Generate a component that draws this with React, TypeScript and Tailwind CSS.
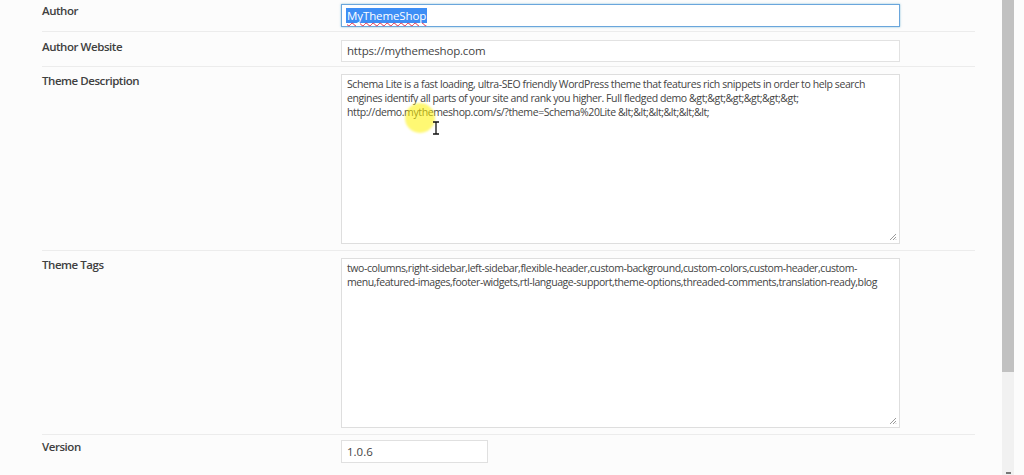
import React from "react";

const Grip = () => (
  <svg className="absolute right-[2px] bottom-[2px]" width="8" height="8" viewBox="0 0 8 8">
    <path d="M7 1 L1 7 M7 4 L4 7 M7 6.5 L6.5 7" stroke="#9a9a9a" strokeWidth="1" fill="none" />
  </svg>
);

const Row = ({
  label,
  className,
  children,
  last,
}: {
  label: string;
  className: string;
  children: React.ReactNode;
  last?: boolean;
}) => (
  <div className={`flex ${last ? "" : "border-b border-[#ececec]"} ${className}`}>
    <div className="w-[299px] shrink-0 text-[11.5px] leading-[14px] font-semibold tracking-[-0.45px] text-[#404040]">
      {label}
    </div>
    <div className="flex-1">{children}</div>
  </div>
);

const App = () => {
  const descLines = [
    "Schema Lite is a fast loading, ultra-SEO friendly WordPress theme that features rich snippets in order to help search",
    "engines identify all parts of your site and rank you higher. Full fledged demo &gt;&gt;&gt;&gt;&gt;&gt;",
    "http://demo.mythemeshop.com/s/?theme=Schema%20Lite &lt;&lt;&lt;&lt;&lt;&lt;",
  ];
  const tagLines = [
    "two-columns,right-sidebar,left-sidebar,flexible-header,custom-background,custom-colors,custom-header,custom-",
    "menu,featured-images,footer-widgets,rtl-language-support,theme-options,threaded-comments,translation-ready,blog",
  ];

  return (
    <div className="relative flex h-[475px] w-[1024px] overflow-hidden bg-[#fcfcfc] font-['Open_Sans',sans-serif] text-[#444]">
      <div className="w-[975px] shrink-0 pl-[42px]">
        {/* Author */}
        <Row label="Author" className="pt-[4px] pb-[4px]">
          <div className="flex h-[23px] w-[559px] items-center border border-[#6aa6dc] bg-white px-[4px] text-[11.5px] shadow-[0_0_2px_rgba(30,140,190,0.5)]">
            <span className="bg-[#3d8ef5] px-[1px] leading-[15px] tracking-[-0.1px] text-white underline decoration-wavy decoration-[#e0304a] decoration-1 underline-offset-2">
              MyThemeShop
            </span>
          </div>
        </Row>

        {/* Author Website */}
        <Row label="Author Website" className="pt-[8px] pb-[4px]">
          <div className="flex h-[22px] w-[559px] items-center border border-[#e2e2e2] bg-white px-[5px] text-[11.5px] tracking-[-0.2px]">
            https://mythemeshop.com
          </div>
        </Row>

        {/* Theme Description */}
        <Row label="Theme Description" className="pt-[7px] pb-[6px]">
          <div className="relative h-[170px] w-[559px] border border-[#dedede] bg-white px-[5px] pt-[2px] text-[10.5px] leading-[14px] tracking-[-0.4px]">
            {descLines.map((l) => (
              <div key={l} className="whitespace-nowrap">
                {l}
              </div>
            ))}
            <Grip />
          </div>
        </Row>

        {/* Theme Tags */}
        <Row label="Theme Tags" className="pt-[7px] pb-[6px]">
          <div className="relative h-[170px] w-[559px] border border-[#dedede] bg-white px-[5px] pt-[2px] text-[10.5px] leading-[14px] tracking-[-0.42px]">
            {tagLines.map((l) => (
              <div key={l} className="whitespace-nowrap">
                {l}
              </div>
            ))}
            <Grip />
          </div>
        </Row>

        {/* Version */}
        <Row label="Version" className="pt-[5px]" last>
          <div className="flex h-[23px] w-[147px] items-center border border-[#e0e0e0] bg-white px-[5px] text-[11.5px]">
            1.0.6
          </div>
        </Row>
      </div>

      {/* scrollbar */}
      <div className="ml-[27px] flex w-[12px] flex-col bg-[#f1f1f1]">
        <div className="h-[372px] bg-[#c1c1c1]" />
        <div className="flex-1" />
        <div className="mx-auto mb-[1px] h-[2px] w-[5px] bg-[#777]" />
      </div>

      {/* cursor highlight */}
      <div className="pointer-events-none absolute left-[405px] top-[103px] h-[30px] w-[30px] rounded-full bg-[#fff200]/55 blur-[1px]" />
      <svg className="pointer-events-none absolute left-[432px] top-[121px]" width="8" height="14" viewBox="0 0 8 14">
        <path d="M1 1 H7 M4 1 V13 M1 13 H7" stroke="#111" strokeWidth="1.3" fill="none" />
      </svg>
    </div>
  );
};

export default App;
